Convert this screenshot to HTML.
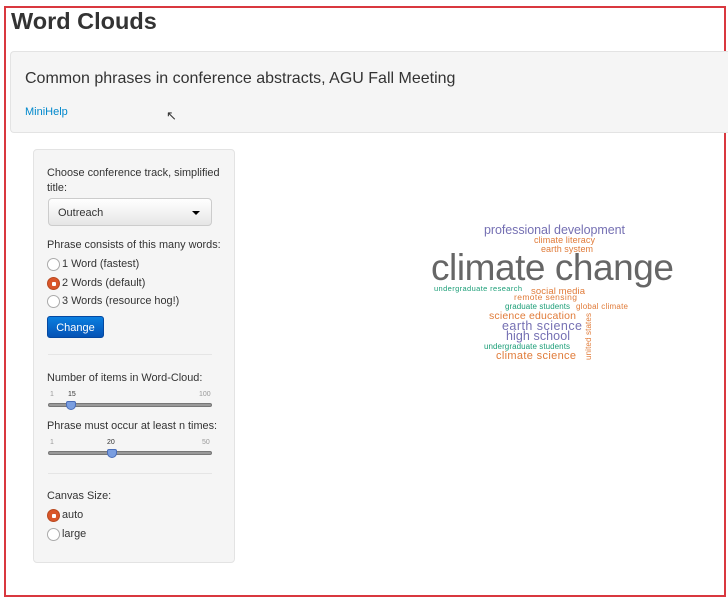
<!DOCTYPE html>
<html><head><style>
*{box-sizing:border-box}
body{margin:0;width:728px;height:599px;overflow:hidden;background:#fff;font-family:"Liberation Sans",sans-serif;color:#333;position:relative}
.frame{position:absolute;left:4px;top:6px;width:722px;height:591px;border:2px solid #d9383f}
h1{position:absolute;left:11px;top:8px;margin:0;font-size:23.5px;font-weight:bold;color:#333}
.well{position:absolute;left:10px;top:51px;width:718px;height:82px;background:#f5f5f5;border:1px solid #e3e3e3;border-right:none;border-radius:4px 0 0 4px}
.well .t{position:absolute;left:14px;top:18px;font-size:16px;color:#333}
.well a{position:absolute;left:14px;top:54px;font-size:11px;color:#0088cc;text-decoration:none}
.side{position:absolute;left:33px;top:149px;width:202px;height:414px;background:#f5f5f5;border:1px solid #e3e3e3;border-radius:4px}
.l{position:absolute;left:13px;font-size:10.9px;color:#333;white-space:nowrap}
.sel{position:absolute;left:14px;top:48px;width:164px;height:28px;border:1px solid #ccc;border-radius:4px;background:linear-gradient(#fff,#e6e6e6);font-size:11px;padding:8px 0 0 9px}
.sel:after{content:"";position:absolute;right:11px;top:12px;border:4px solid transparent;border-top:4px solid #000;border-bottom:none}
.r{position:absolute;left:13px;width:13px;height:13px;border-radius:50%;border:1px solid #aaa;background:#fff}
.r.on{background:#d9562a;border-color:#b94a20}
.r.on:after{content:"";position:absolute;left:3.5px;top:3.5px;width:4px;height:4px;background:#fff;border-radius:1px}
.btn{position:absolute;left:13px;top:166px;width:57px;height:22px;border-radius:3px;background:linear-gradient(#0a7fe0,#0552b5);color:#fff;font-size:11px;text-align:center;line-height:22px;border:1px solid #0448a0}
.hr{position:absolute;left:14px;width:164px;height:1px;background:#e5e5e5}
.track{position:absolute;left:14px;width:164px;height:4px;border-radius:2px;background:#999;border:1px solid #777}
.n{position:absolute;font-size:7px;color:#999}
.h{position:absolute;width:10px;height:9px;background:#7a9ee0;border:1px solid #4a6db8;border-radius:2px 2px 5px 5px}
</style></head><body>
<div class="frame"></div>
<h1>Word Clouds</h1>
<div class="well"><div class="t">Common phrases in conference abstracts, AGU Fall Meeting</div><a>MiniHelp</a></div>
<div style="position:absolute;left:166px;top:108px;font-size:13px">&#x2196;</div>
<div class="side">
<div class="l" style="top:17px">Choose conference track, simplified</div>
<div class="l" style="top:32px">title:</div>
<div class="sel">Outreach</div>
<div class="l" style="top:89px">Phrase consists of this many words:</div>
<div class="r" style="top:108px"></div><div class="l" style="left:28px;top:108px">1 Word (fastest)</div>
<div class="r on" style="top:127px"></div><div class="l" style="left:28px;top:127px">2 Words (default)</div>
<div class="r" style="top:145px"></div><div class="l" style="left:28px;top:145px">3 Words (resource hog!)</div>
<div class="btn">Change</div>
<div class="hr" style="top:204px"></div>
<div class="l" style="top:222px">Number of items in Word-Cloud:</div>
<div class="n" style="left:16px;top:241px">1</div><div class="n" style="left:34px;top:241px;color:#333">15</div><div class="n" style="left:165px;top:241px">100</div>
<div class="track" style="top:253px"></div><div class="h" style="left:32px;top:251px"></div>
<div class="l" style="top:270px">Phrase must occur at least n times:</div>
<div class="n" style="left:16px;top:289px">1</div><div class="n" style="left:73px;top:289px;color:#333">20</div><div class="n" style="left:168px;top:289px">50</div>
<div class="track" style="top:301px"></div><div class="h" style="left:73px;top:299px"></div>
<div class="hr" style="top:323px"></div>
<div class="l" style="top:340px">Canvas Size:</div>
<div class="r on" style="top:359px"></div><div class="l" style="left:28px;top:359px">auto</div>
<div class="r" style="top:378px"></div><div class="l" style="left:28px;top:378px">large</div>
</div>
<svg style="position:absolute;left:0;top:0" width="728" height="599" font-family="Liberation Sans, sans-serif">
<text x="484" y="234" font-size="12.5" fill="#7570b3" textLength="141">professional development</text>
<text x="534" y="243" font-size="9" fill="#e07b39" textLength="61">climate literacy</text>
<text x="541" y="252" font-size="9" fill="#e07b39" textLength="52">earth system</text>
<text x="431" y="280" font-size="37" fill="#666" textLength="243">climate change</text>
<text x="434" y="291" font-size="7.5" fill="#1b9e77" textLength="88">undergraduate research</text>
<text x="531" y="294" font-size="9.5" fill="#e07b39" textLength="54">social media</text>
<text x="514" y="300" font-size="8.5" fill="#e07b39" textLength="63">remote sensing</text>
<text x="505" y="309" font-size="8" fill="#1b9e77" textLength="65">graduate students</text>
<text x="576" y="309" font-size="8" fill="#e07b39" textLength="52">global climate</text>
<text x="489" y="319" font-size="10.5" fill="#e07b39" textLength="87">science education</text>
<text x="502" y="330" font-size="12.5" fill="#7570b3" textLength="80">earth science</text>
<text x="506" y="340" font-size="12.5" fill="#7570b3" textLength="64">high school</text>
<text x="484" y="349" font-size="8" fill="#1b9e77" textLength="86">undergraduate students</text>
<text x="496" y="359" font-size="11" fill="#e07b39" textLength="80">climate science</text>
<text transform="translate(591,360) rotate(-90)" font-size="8" fill="#e07b39" textLength="47">united states</text>
</svg>
</body></html>
